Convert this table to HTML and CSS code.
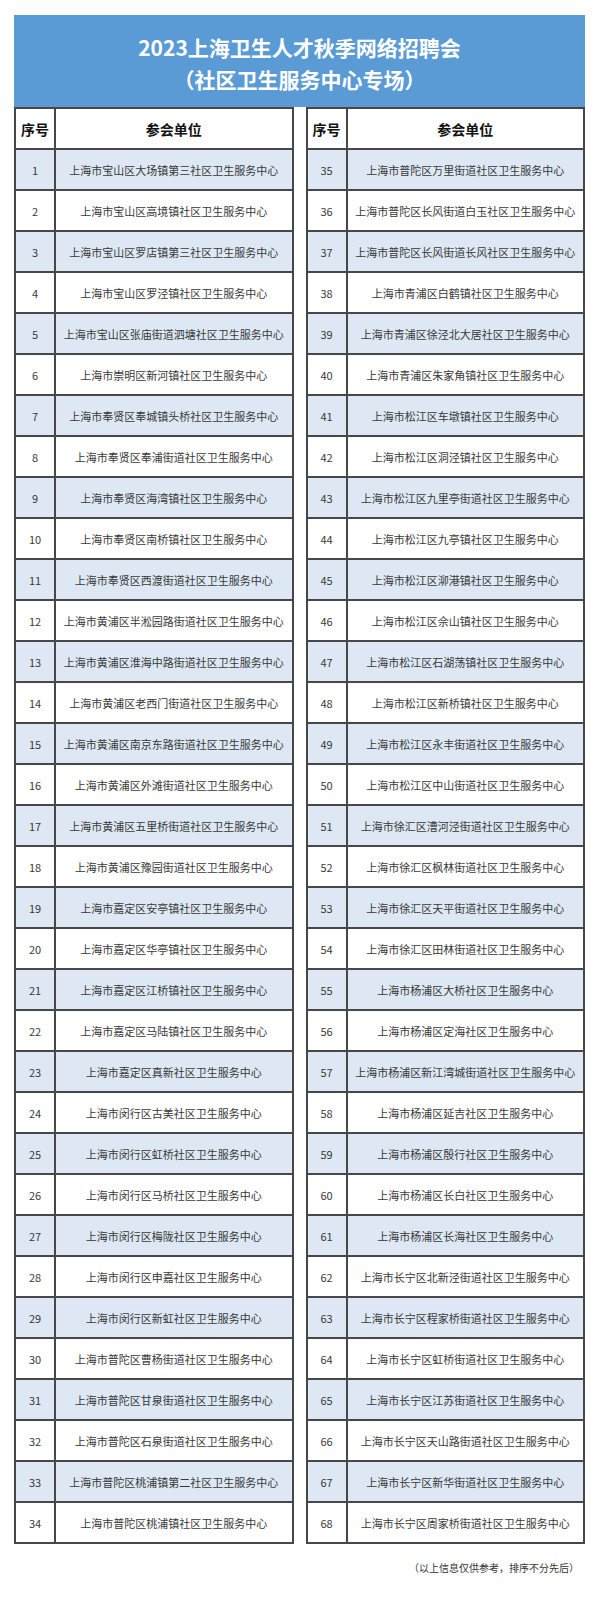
FILE: index.html
```html
<!DOCTYPE html>
<html lang="zh-CN">
<head>
<meta charset="utf-8">
<title>2023上海卫生人才秋季网络招聘会（社区卫生服务中心专场）</title>
<link rel="stylesheet" href="styles.css">
</head>
<body>
<div class="page">
  <header class="banner">
    <div class="banner-line">2023上海卫生人才秋季网络招聘会</div>
    <div class="banner-line">（社区卫生服务中心专场）</div>
  </header>
  <div class="tables">
    <table class="list">
      <thead><tr><th class="no">序号</th><th>参会单位</th></tr></thead>
      <tbody>
        <tr class="alt"><td class="no">1</td><td>上海市宝山区大场镇第三社区卫生服务中心</td></tr>
        <tr><td class="no">2</td><td>上海市宝山区高境镇社区卫生服务中心</td></tr>
        <tr class="alt"><td class="no">3</td><td>上海市宝山区罗店镇第三社区卫生服务中心</td></tr>
        <tr><td class="no">4</td><td>上海市宝山区罗泾镇社区卫生服务中心</td></tr>
        <tr class="alt"><td class="no">5</td><td>上海市宝山区张庙街道泗塘社区卫生服务中心</td></tr>
        <tr><td class="no">6</td><td>上海市崇明区新河镇社区卫生服务中心</td></tr>
        <tr class="alt"><td class="no">7</td><td>上海市奉贤区奉城镇头桥社区卫生服务中心</td></tr>
        <tr><td class="no">8</td><td>上海市奉贤区奉浦街道社区卫生服务中心</td></tr>
        <tr class="alt"><td class="no">9</td><td>上海市奉贤区海湾镇社区卫生服务中心</td></tr>
        <tr><td class="no">10</td><td>上海市奉贤区南桥镇社区卫生服务中心</td></tr>
        <tr class="alt"><td class="no">11</td><td>上海市奉贤区西渡街道社区卫生服务中心</td></tr>
        <tr><td class="no">12</td><td>上海市黄浦区半淞园路街道社区卫生服务中心</td></tr>
        <tr class="alt"><td class="no">13</td><td>上海市黄浦区淮海中路街道社区卫生服务中心</td></tr>
        <tr><td class="no">14</td><td>上海市黄浦区老西门街道社区卫生服务中心</td></tr>
        <tr class="alt"><td class="no">15</td><td>上海市黄浦区南京东路街道社区卫生服务中心</td></tr>
        <tr><td class="no">16</td><td>上海市黄浦区外滩街道社区卫生服务中心</td></tr>
        <tr class="alt"><td class="no">17</td><td>上海市黄浦区五里桥街道社区卫生服务中心</td></tr>
        <tr><td class="no">18</td><td>上海市黄浦区豫园街道社区卫生服务中心</td></tr>
        <tr class="alt"><td class="no">19</td><td>上海市嘉定区安亭镇社区卫生服务中心</td></tr>
        <tr><td class="no">20</td><td>上海市嘉定区华亭镇社区卫生服务中心</td></tr>
        <tr class="alt"><td class="no">21</td><td>上海市嘉定区江桥镇社区卫生服务中心</td></tr>
        <tr><td class="no">22</td><td>上海市嘉定区马陆镇社区卫生服务中心</td></tr>
        <tr class="alt"><td class="no">23</td><td>上海市嘉定区真新社区卫生服务中心</td></tr>
        <tr><td class="no">24</td><td>上海市闵行区古美社区卫生服务中心</td></tr>
        <tr class="alt"><td class="no">25</td><td>上海市闵行区虹桥社区卫生服务中心</td></tr>
        <tr><td class="no">26</td><td>上海市闵行区马桥社区卫生服务中心</td></tr>
        <tr class="alt"><td class="no">27</td><td>上海市闵行区梅陇社区卫生服务中心</td></tr>
        <tr><td class="no">28</td><td>上海市闵行区申嘉社区卫生服务中心</td></tr>
        <tr class="alt"><td class="no">29</td><td>上海市闵行区新虹社区卫生服务中心</td></tr>
        <tr><td class="no">30</td><td>上海市普陀区曹杨街道社区卫生服务中心</td></tr>
        <tr class="alt"><td class="no">31</td><td>上海市普陀区甘泉街道社区卫生服务中心</td></tr>
        <tr><td class="no">32</td><td>上海市普陀区石泉街道社区卫生服务中心</td></tr>
        <tr class="alt"><td class="no">33</td><td>上海市普陀区桃浦镇第二社区卫生服务中心</td></tr>
        <tr><td class="no">34</td><td>上海市普陀区桃浦镇社区卫生服务中心</td></tr>
      </tbody>
    </table>
    <table class="list">
      <thead><tr><th class="no">序号</th><th>参会单位</th></tr></thead>
      <tbody>
        <tr class="alt"><td class="no">35</td><td>上海市普陀区万里街道社区卫生服务中心</td></tr>
        <tr><td class="no">36</td><td>上海市普陀区长风街道白玉社区卫生服务中心</td></tr>
        <tr class="alt"><td class="no">37</td><td>上海市普陀区长风街道长风社区卫生服务中心</td></tr>
        <tr><td class="no">38</td><td>上海市青浦区白鹤镇社区卫生服务中心</td></tr>
        <tr class="alt"><td class="no">39</td><td>上海市青浦区徐泾北大居社区卫生服务中心</td></tr>
        <tr><td class="no">40</td><td>上海市青浦区朱家角镇社区卫生服务中心</td></tr>
        <tr class="alt"><td class="no">41</td><td>上海市松江区车墩镇社区卫生服务中心</td></tr>
        <tr><td class="no">42</td><td>上海市松江区洞泾镇社区卫生服务中心</td></tr>
        <tr class="alt"><td class="no">43</td><td>上海市松江区九里亭街道社区卫生服务中心</td></tr>
        <tr><td class="no">44</td><td>上海市松江区九亭镇社区卫生服务中心</td></tr>
        <tr class="alt"><td class="no">45</td><td>上海市松江区泖港镇社区卫生服务中心</td></tr>
        <tr><td class="no">46</td><td>上海市松江区佘山镇社区卫生服务中心</td></tr>
        <tr class="alt"><td class="no">47</td><td>上海市松江区石湖荡镇社区卫生服务中心</td></tr>
        <tr><td class="no">48</td><td>上海市松江区新桥镇社区卫生服务中心</td></tr>
        <tr class="alt"><td class="no">49</td><td>上海市松江区永丰街道社区卫生服务中心</td></tr>
        <tr><td class="no">50</td><td>上海市松江区中山街道社区卫生服务中心</td></tr>
        <tr class="alt"><td class="no">51</td><td>上海市徐汇区漕河泾街道社区卫生服务中心</td></tr>
        <tr><td class="no">52</td><td>上海市徐汇区枫林街道社区卫生服务中心</td></tr>
        <tr class="alt"><td class="no">53</td><td>上海市徐汇区天平街道社区卫生服务中心</td></tr>
        <tr><td class="no">54</td><td>上海市徐汇区田林街道社区卫生服务中心</td></tr>
        <tr class="alt"><td class="no">55</td><td>上海市杨浦区大桥社区卫生服务中心</td></tr>
        <tr><td class="no">56</td><td>上海市杨浦区定海社区卫生服务中心</td></tr>
        <tr class="alt"><td class="no">57</td><td>上海市杨浦区新江湾城街道社区卫生服务中心</td></tr>
        <tr><td class="no">58</td><td>上海市杨浦区延吉社区卫生服务中心</td></tr>
        <tr class="alt"><td class="no">59</td><td>上海市杨浦区殷行社区卫生服务中心</td></tr>
        <tr><td class="no">60</td><td>上海市杨浦区长白社区卫生服务中心</td></tr>
        <tr class="alt"><td class="no">61</td><td>上海市杨浦区长海社区卫生服务中心</td></tr>
        <tr><td class="no">62</td><td>上海市长宁区北新泾街道社区卫生服务中心</td></tr>
        <tr class="alt"><td class="no">63</td><td>上海市长宁区程家桥街道社区卫生服务中心</td></tr>
        <tr><td class="no">64</td><td>上海市长宁区虹桥街道社区卫生服务中心</td></tr>
        <tr class="alt"><td class="no">65</td><td>上海市长宁区江苏街道社区卫生服务中心</td></tr>
        <tr><td class="no">66</td><td>上海市长宁区天山路街道社区卫生服务中心</td></tr>
        <tr class="alt"><td class="no">67</td><td>上海市长宁区新华街道社区卫生服务中心</td></tr>
        <tr><td class="no">68</td><td>上海市长宁区周家桥街道社区卫生服务中心</td></tr>
      </tbody>
    </table>
  </div>
  <p class="note">（以上信息仅供参考，排序不分先后）</p>
</div>
</body>
</html>
```

FILE: styles.css
```css
html, body {
  margin: 0;
  padding: 0;
  background: #ffffff;
}

body {
  font-family: "Noto Sans CJK SC", "Noto Sans", sans-serif;
  color: #333333;
}

.page {
  width: 571px;
  padding: 15px 14px 0 14px;
}

.banner {
  background: #5b9bd5;
  color: #ffffff;
  height: 92px;
  box-sizing: border-box;
  padding-top: 16px;
  text-align: center;
  font-size: 21px;
  font-weight: bold;
  line-height: 32px;
}

.tables {
  display: grid;
  grid-template-columns: 1fr 1fr;
  column-gap: 12px;
}

.list {
  width: 100%;
  border-collapse: collapse;
  table-layout: fixed;
  border: 2px solid #474747;
}

.list th,
.list td {
  border: 2px solid #474747;
  height: 41px;
  padding: 0;
  text-align: center;
  vertical-align: middle;
  box-sizing: border-box;
}

.list th {
  font-size: 14px;
  font-weight: bold;
  color: #111111;
  background: #ffffff;
}

.list td {
  font-size: 11px;
  color: #383838;
  white-space: nowrap;
}

.list .no {
  width: 40px;
}

.list tr.alt td {
  background: #dde8f4;
}

.note {
  margin: 17px 6px 0 0;
  text-align: right;
  font-size: 10px;
  line-height: 14px;
  color: #333333;
}
```
